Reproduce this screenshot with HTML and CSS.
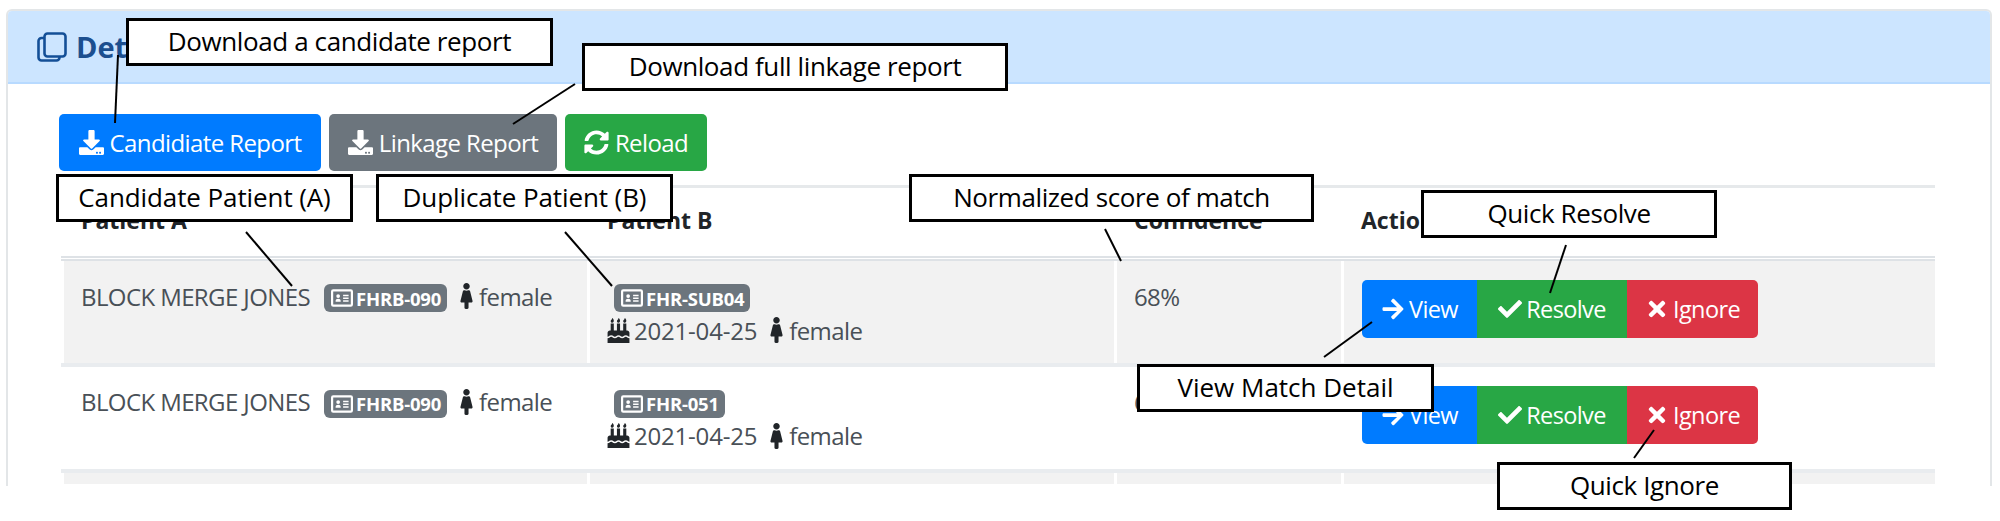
FILE: index.html
```html
<!DOCTYPE html>
<html lang="en">
<head>
<meta charset="utf-8">
<title>Linkage report</title>
<link rel="stylesheet" href="styles.css">
</head>
<body>
<svg width="0" height="0" class="defs">
  <symbol id="i-download" viewBox="0 0 512 512"><path d="M216 0h80c13.3 0 24 10.7 24 24v168h87.7c17.8 0 26.7 21.5 14.1 34.1L269.7 378.3c-7.5 7.5-19.8 7.5-27.3 0L90.1 226.1c-12.6-12.6-3.7-34.1 14.1-34.1H192V24c0-13.3 10.7-24 24-24zm296 376v112c0 13.3-10.7 24-24 24H24c-13.3 0-24-10.7-24-24V376c0-13.3 10.7-24 24-24h146.7l49 49c20.1 20.1 52.5 20.1 72.6 0l49-49H488c13.3 0 24 10.7 24 24zm-124 88c0-11-9-20-20-20s-20 9-20 20 9 20 20 20 20-9 20-20zm64 0c0-11-9-20-20-20s-20 9-20 20 9 20 20 20 20-9 20-20z"/></symbol>
  <symbol id="i-sync" viewBox="0 0 512 512"><path d="M370.72 133.28C339.458 104.008 298.888 87.962 255.848 88c-77.458.068-144.328 53.178-162.791 126.85-1.344 5.363-6.122 9.15-11.651 9.15H24.103c-7.498 0-13.194-6.807-11.807-14.176C33.933 94.924 134.813 8 256 8c66.448 0 126.791 26.136 171.315 68.685L463.03 40.97C478.149 25.851 504 36.559 504 57.941V192c0 13.255-10.745 24-24 24H345.941c-21.382 0-32.09-25.851-16.971-40.971l41.75-41.749zM32 296h134.059c21.382 0 32.09 25.851 16.971 40.971l-41.75 41.75c31.262 29.273 71.835 45.319 114.876 45.28 77.418-.07 144.315-53.144 162.787-126.849 1.344-5.363 6.122-9.15 11.651-9.15h57.304c7.498 0 13.194 6.807 11.807 14.176C478.067 417.076 377.187 504 256 504c-66.448 0-126.791-26.136-171.315-68.685L48.97 471.03C33.851 486.149 8 475.441 8 454.059V320c0-13.255 10.745-24 24-24z"/></symbol>
  <symbol id="i-arrow" viewBox="0 0 448 512"><path d="M190.5 66.9l22.2-22.2c9.4-9.4 24.6-9.4 33.9 0L441 239c9.4 9.4 9.4 24.6 0 33.9L246.6 467.3c-9.4 9.4-24.6 9.4-33.9 0l-22.2-22.2c-9.5-9.5-9.3-25 .4-34.3L311.4 296H24c-13.3 0-24-10.7-24-24v-32c0-13.3 10.7-24 24-24h287.4L190.9 101.2c-9.8-9.3-10-24.8-.4-34.3z"/></symbol>
  <symbol id="i-check" viewBox="0 0 512 512"><path d="M173.898 439.404l-166.4-166.4c-9.997-9.997-9.997-26.206 0-36.204l36.203-36.204c9.997-9.998 26.207-9.998 36.204 0L192 312.69 432.095 72.596c9.997-9.997 26.207-9.997 36.204 0l36.203 36.204c9.997 9.997 9.997 26.206 0 36.204l-294.4 294.401c-9.998 9.997-26.207 9.997-36.204-.001z"/></symbol>
  <symbol id="i-times" viewBox="0 0 352 512"><path d="M242.72 256l100.07-100.07c12.28-12.28 12.28-32.19 0-44.48l-22.24-22.24c-12.28-12.28-32.19-12.28-44.48 0L176 189.28 75.93 89.21c-12.28-12.28-32.19-12.28-44.48 0L9.21 111.45c-12.28 12.28-12.28 32.19 0 44.48L109.28 256 9.21 356.07c-12.28 12.28-12.28 32.19 0 44.48l22.24 22.24c12.28 12.28 32.2 12.28 44.48 0L176 322.72l100.07 100.07c12.28 12.28 32.2 12.28 44.48 0l22.24-22.24c12.28-12.28 12.28-32.19 0-44.48L242.72 256z"/></symbol>
  <symbol id="i-female" viewBox="0 0 256 512"><path d="M128 0c35.346 0 64 28.654 64 64s-28.654 64-64 64c-35.346 0-64-28.654-64-64S92.654 0 128 0m119.283 354.179l-48-192A24 24 0 0 0 176 144h-11.36c-22.711 10.443-49.59 10.894-73.28 0H80a24 24 0 0 0-23.283 18.179l-48 192C4.935 369.305 16.383 384 32 384h56v104c0 13.255 10.745 24 24 24h32c13.255 0 24-10.745 24-24V384h56c15.591 0 27.071-14.671 23.283-29.821z"/></symbol>
  <symbol id="i-cake" viewBox="0 0 448 512"><path d="M448 384c-28.02 0-31.26-32-74.5-32-43.43 0-46.825 32-74.75 32-27.695 0-31.454-32-74.75-32-42.842 0-47.218 32-74.5 32-28.148 0-31.202-32-74.75-32-43.547 0-46.653 32-74.75 32v-80c0-26.5 21.5-48 48-48h16V112h64v144h64V112h64v144h64V112h64v144h16c26.5 0 48 21.5 48 48v80zm0 128H0v-96c43.356 0 46.767-32 74.75-32 27.951 0 31.253 32 74.75 32 42.843 0 47.217-32 74.5-32 28.148 0 31.201 32 74.75 32 43.357 0 46.767-32 74.75-32 27.488 0 31.252 32 74.5 32v96zM96 96c-17.75 0-32-14.25-32-32 0-31 32-23 32-64 12 0 32 29.5 32 56s-14.25 40-32 40zm128 0c-17.75 0-32-14.25-32-32 0-31 32-23 32-64 12 0 32 29.5 32 56s-14.25 40-32 40zm128 0c-17.75 0-32-14.25-32-32 0-31 32-23 32-64 12 0 32 29.5 32 56s-14.25 40-32 40z"/></symbol>
  <symbol id="i-card" viewBox="0 0 20 16"><path fill-rule="evenodd" d="M2 0h16a2 2 0 0 1 2 2v12a2 2 0 0 1-2 2H2a2 2 0 0 1-2-2V2a2 2 0 0 1 2-2zm0 2v12h16V2zm2.200 8.600c0-1.200 1-1.900 2.300-1.900s2.300.7 2.300 1.900v.9H4.200zM6.500 4.500a1.700 1.700 0 1 1 0 3.400 1.700 1.700 0 0 1 0-3.400zM11 5h5v1.500h-5zm0 2.500h5V9h-5zm0 2.500h5v1.500h-5z"/></symbol>
</svg>

<div class="stage">
  <section class="card">
    <header class="card-head">
      <svg class="title-icon" viewBox="0 0 30 30"><rect x="7.500" y="1.500" width="21" height="23" rx="3"/><path d="M7.500 6H4.500a3 3 0 0 0-3 3v16.500a3 3 0 0 0 3 3h15a3 3 0 0 0 3-3v-1"/></svg>
      <h2 class="title">Det</h2>
    </header>
    <div class="card-body">
      <div class="toolbar">
        <button class="btn btn-report blue"><svg class="ico"><use href="#i-download"/></svg>Candidiate Report</button>
        <button class="btn btn-report gray"><svg class="ico"><use href="#i-download"/></svg>Linkage Report</button>
        <button class="btn btn-report green"><svg class="ico"><use href="#i-sync"/></svg>Reload</button>
      </div>
      <table class="matches">
        <thead>
          <tr><th>Patient A</th><th>Patient B</th><th>Confidence</th><th>Action</th></tr>
        </thead>
        <tbody>
          <tr class="odd">
            <td><div class="line">BLOCK MERGE JONES<span class="badge"><svg class="ico-card"><use href="#i-card"/></svg>FHRB-090</span><svg class="ico-f"><use href="#i-female"/></svg>female</div></td>
            <td><div class="line"><span class="badge b-col"><svg class="ico-card"><use href="#i-card"/></svg>FHR-SUB04</span></div>
                <div class="line second"><svg class="ico-cake"><use href="#i-cake"/></svg><span class="date">2021-04-25</span><svg class="ico-f"><use href="#i-female"/></svg>female</div></td>
            <td><div class="line">68%</div></td>
            <td><div class="group">
              <button class="act blue"><svg class="ico-a"><use href="#i-arrow"/></svg>View</button><button class="act green"><svg class="ico-a"><use href="#i-check"/></svg>Resolve</button><button class="act red"><svg class="ico-a"><use href="#i-times"/></svg>Ignore</button>
            </div></td>
          </tr>
          <tr>
            <td><div class="line">BLOCK MERGE JONES<span class="badge"><svg class="ico-card"><use href="#i-card"/></svg>FHRB-090</span><svg class="ico-f"><use href="#i-female"/></svg>female</div></td>
            <td><div class="line"><span class="badge b-col"><svg class="ico-card"><use href="#i-card"/></svg>FHR-051</span></div>
                <div class="line second"><svg class="ico-cake"><use href="#i-cake"/></svg><span class="date">2021-04-25</span><svg class="ico-f"><use href="#i-female"/></svg>female</div></td>
            <td><div class="line">68%</div></td>
            <td><div class="group">
              <button class="act blue"><svg class="ico-a"><use href="#i-arrow"/></svg>View</button><button class="act green"><svg class="ico-a"><use href="#i-check"/></svg>Resolve</button><button class="act red"><svg class="ico-a"><use href="#i-times"/></svg>Ignore</button>
            </div></td>
          </tr>
          <tr class="odd stub"><td></td><td></td><td></td><td></td></tr>
        </tbody>
      </table>
    </div>
  </section>

  <svg class="leaders" viewBox="0 0 2000 521">
    <line x1="118" y1="55" x2="115" y2="123"/>
    <line x1="575" y1="84" x2="513" y2="124"/>
    <line x1="246" y1="232" x2="292" y2="286"/>
    <line x1="565" y1="232" x2="612" y2="286"/>
    <line x1="1105" y1="229" x2="1121" y2="261"/>
    <line x1="1566" y1="245" x2="1550" y2="293"/>
    <line x1="1372" y1="322" x2="1324" y2="357"/>
    <line x1="1654" y1="430" x2="1634" y2="458"/>
  </svg>
  <div class="note n1">Download a candidate report</div>
  <div class="note n2">Download full linkage report</div>
  <div class="note n3">Candidate Patient (A)</div>
  <div class="note n4">Duplicate Patient (B)</div>
  <div class="note n5">Normalized score of match</div>
  <div class="note n6">Quick Resolve</div>
  <div class="note n7">View Match Detail</div>
  <div class="note n8">Quick Ignore</div>
</div>
</body>
</html>
```
FILE: styles.css
```css
* { box-sizing: border-box; }
html, body { margin: 0; padding: 0; background: #fff; }
body { font-family: "Open Sans", "Liberation Sans", sans-serif; color: #343a40; }
.defs { position: absolute; }
.stage { position: relative; width: 2000px; height: 521px; overflow: hidden; padding: 9px 8px 0 6px; }

.card { height: 477px; border: solid #e3e6e8; border-width: 2px 2px 0 2px; border-radius: 6px 6px 0 0; overflow: hidden; }
.card-head { height: 73px; background: #cce5ff; border-bottom: 2px solid #b8daff; display: flex; align-items: center; padding-left: 29px; gap: 9px; }
.title-icon { width: 30px; height: 30px; fill: none; stroke: #134f97; stroke-width: 2.6; }
.title { margin: 0; font-size: 29px; font-weight: 700; color: #1c4f8f; }

.card-body { padding: 30px 0 0 51px; }
.toolbar { display: flex; gap: 8px; height: 57px; margin-bottom: 14px; }
.btn { border: 0; border-radius: 5px; color: #fff; font: 400 24px "Open Sans", sans-serif; letter-spacing: -0.6px; display: flex; align-items: center; justify-content: center; padding: 0; }
.btn:nth-child(1) { width: 262px; }
.btn:nth-child(2) { width: 228px; }
.btn:nth-child(3) { width: 142px; }
.ico { width: 25px; height: 25px; fill: #fff; margin-right: 6px; }
.blue { background: #007bff; }
.gray { background: #6c757d; }
.green { background: #28a745; }
.red { background: #dc3545; }

.matches { width: 1874px; margin-left: 2px; table-layout: fixed; border-collapse: collapse; font-size: 24px; }
.matches th:nth-child(1), .matches td:nth-child(1) { width: 526px; }
.matches th:nth-child(2), .matches td:nth-child(2) { width: 527px; }
.matches th:nth-child(3), .matches td:nth-child(3) { width: 227px; }
.matches th { height: 72px; text-align: left; vertical-align: bottom; padding: 0 0 20px 17px; font-size: 23px; font-weight: 700; color: #212529; border-top: 3px solid #e6e9eb; border-bottom: 5px double #dee2e6; border-left: 3px solid #fff; }
.matches td { vertical-align: top; padding: 19px 0 0 17px; border-bottom: 4px solid #e9ecef; border-left: 3px solid #fff; height: 106px; color: #495057; }
.odd td { background: #f2f2f2; }
.matches .stub td { height: 13px; padding: 0; border-bottom: 0; }

.line { display: flex; align-items: center; white-space: pre; height: 32px; letter-spacing: -0.6px; }
.second { margin-top: 2px; }
.date { letter-spacing: -0.2px; }
.badge { display: inline-flex; align-items: center; height: 28px; padding: 0 6px 0 7px; margin: 4px 11px 0 14px; background: #6c757d; border-radius: 6px; color: #fff; font-size: 18.5px; font-weight: 700; letter-spacing: -0.2px; }
.b-col { margin-left: 7px; }
.ico-card { width: 22px; height: 18px; fill: #fff; margin-right: 3px; }
.ico-f { width: 13px; height: 26px; fill: #212529; margin: 0 6px 0 2px; }
.date + .ico-f { margin-left: 13px; }
.ico-cake { width: 23px; height: 25px; fill: #212529; margin-right: 4px; }

.group { display: flex; margin: 0 0 0 1px; height: 58px; }
.act { border: 0; color: #fff; font: 400 23.5px "Open Sans", sans-serif; letter-spacing: -0.6px; display: flex; align-items: center; justify-content: center; padding: 0; }
.act:nth-child(1) { width: 115px; border-radius: 5px 0 0 5px; }
.act:nth-child(2) { width: 150px; }
.act:nth-child(3) { width: 131px; border-radius: 0 5px 5px 0; }
.ico-a { width: 24px; height: 24px; fill: #fff; margin-right: 4px; }

.leaders { position: absolute; left: 0; top: 0; width: 2000px; height: 521px; }
.leaders line { stroke: #000; stroke-width: 2; }
.note { position: absolute; display: flex; align-items: center; justify-content: center; padding-bottom: 3px; background: #fff; border: 3px solid #000; color: #000; font-size: 26px; letter-spacing: -0.4px; white-space: nowrap; }
.n1 { left: 126px; top: 18px; width: 427px; height: 48px; }
.n2 { left: 582px; top: 43px; width: 426px; height: 48px; }
.n3 { left: 56px; top: 174px; width: 297px; height: 48px; letter-spacing: -0.1px; }
.n4 { left: 376px; top: 174px; width: 297px; height: 48px; letter-spacing: -0.1px; }
.n5 { left: 909px; top: 174px; width: 405px; height: 48px; }
.n6 { left: 1421px; top: 190px; width: 296px; height: 48px; }
.n7 { left: 1137px; top: 364px; width: 297px; height: 48px; letter-spacing: 0; }
.n8 { left: 1497px; top: 462px; width: 295px; height: 48px; }
```
